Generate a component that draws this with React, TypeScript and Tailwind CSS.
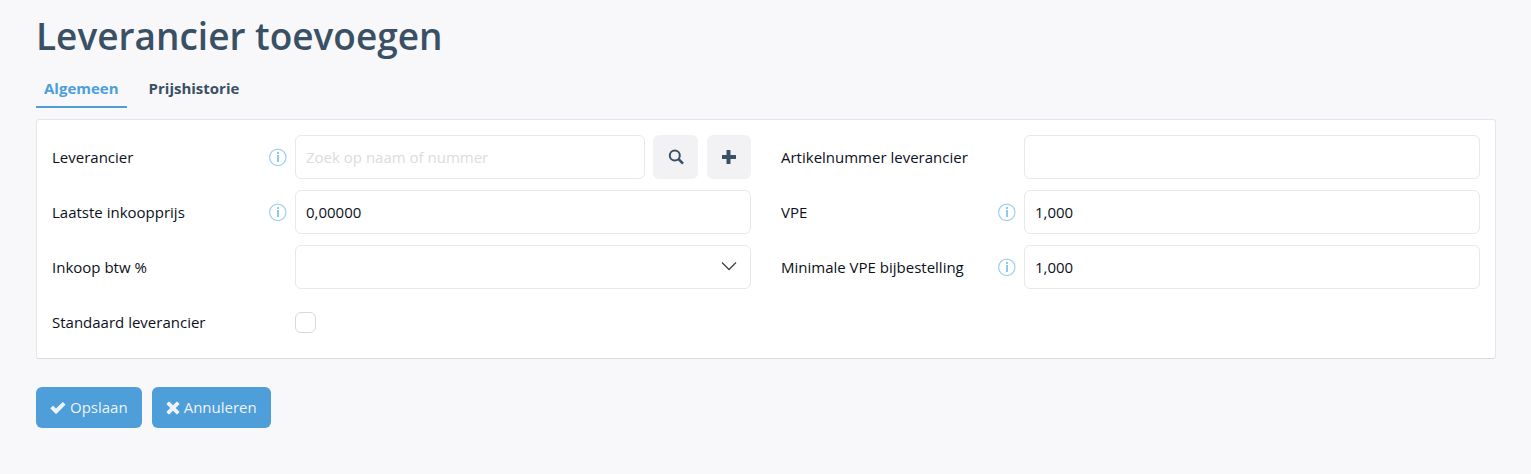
import type { ReactNode } from "react";

const inputClass =
  "h-11 w-full min-w-0 rounded-md border border-[#e8e8e9] bg-white px-[10px] text-[15px] text-[#0c1021] outline-none placeholder:text-[#dcdcdc] focus:border-[#4d9ed9]";

const addonClass =
  "flex h-11 shrink-0 items-center justify-center rounded-md bg-[#f2f2f4] text-[#3a5064]";

const InfoIcon = () => (
  <svg
    className="-mr-[7px] shrink-0"
    width="18"
    height="18"
    viewBox="0 0 18 18"
    fill="none"
    aria-hidden="true"
  >
    <circle cx="8.8" cy="9.3" r="8.200" stroke="#9fd0f1" strokeWidth="1.2" />
    <path d="M8 4h2v2H8zM8 7h2v7H8z" fill="#93c8ee" />
  </svg>
);

const SearchIcon = () => (
  <svg width="16" height="16" viewBox="0 0 16 16" fill="none" stroke="currentColor" aria-hidden="true">
    <circle cx="6.8" cy="6.4" r="5" strokeWidth="2" />
    <path d="M10.6 10.2l4.400 4.400" strokeWidth="2.6" />
  </svg>
);

const PlusIcon = () => (
  <svg width="14" height="14" viewBox="0 0 14 14" fill="currentColor" aria-hidden="true">
    <path d="M5 0h3q.5 0 .5.500V5h5q.5 0 .5.500v3q0 .5-.5.500h-5v4.500q0 .5-.5.500H5q-.5 0-.5-.5V9H0Q-.5 9-.5 8.500v-3Q-.5 5 0 5h4.500V.5Q4.500 0 5 0z" />
  </svg>
);

const CheckIcon = () => (
  <svg width="16" height="14" viewBox="0 0 16 14" fill="currentColor" aria-hidden="true">
    <path d="M12.400 1.200q.4-.4.8 0l2 2q.4.4 0 .8L6.500 12.700q-.5.4-.9 0L.6 7.800q-.4-.4 0-.8l2-2q.4-.4.8 0L6 7.600z" />
  </svg>
);

const CrossIcon = () => (
  <svg width="14" height="14" viewBox="0 0 14 14" fill="currentColor" aria-hidden="true">
    <path d="M3.400.8 7 4.300 10.600.8q.4-.4.800 0l1.800 1.800q.4.4 0 .8L9.700 7l3.500 3.600q.4.4 0 .8l-1.800 1.800q-.4.4-.8 0L7 9.700l-3.600 3.500q-.4.4-.8 0L.8 11.400q-.4-.4 0-.8L4.300 7 .8 3.400q-.4-.4 0-.8L2.600.8q.4-.4.8 0z" />
  </svg>
);

type FieldProps = {
  id: string;
  label: string;
  info?: boolean;
  children: ReactNode;
};

const Field = ({ id, label, info, children }: FieldProps) => (
  <div className="grid min-h-11 grid-cols-3 items-center">
    <div className="flex items-center justify-between pl-[15px]">
      <label htmlFor={id} className="whitespace-nowrap">
        {label}
      </label>
      {info && <InfoIcon />}
    </div>
    <div className="col-span-2 flex items-center px-[15px]">{children}</div>
  </div>
);

const App = () => {
  return (
    <main className="min-h-screen bg-[#f8f8fb] pt-[11px] pr-[35px] pb-11 pl-9 font-['Open_Sans',sans-serif] text-[15px] text-[#0c1021]">
      <h1 className="text-[37px] leading-[50px] font-semibold text-[#3a5064]">
        Leverancier toevoegen
      </h1>

      {/* Tabs */}
      <nav className="mt-[9px] flex gap-[14px] font-bold">
        <a
          href="#algemeen"
          className="border-b-2 border-[#4d9ed9] px-2 py-2 leading-5 text-[#4d9ed9]"
        >
          Algemeen
        </a>
        <a
          href="#prijshistorie"
          className="border-b-2 border-transparent px-2 py-2 leading-5 text-[#3a5064]"
        >
          Prijshistorie
        </a>
      </nav>

      <form>
        <div className="mt-[11px] grid grid-cols-2 rounded-[3px] border border-[#e6e6e9] border-b-[#d9dadd] bg-white pt-[15px] pb-[14px]">
          {/* Left column */}
          <div className="flex flex-col gap-[11px]">
            <Field id="leverancier" label="Leverancier" info>
              <input
                id="leverancier"
                type="text"
                placeholder="Zoek op naam of nummer"
                className={inputClass}
              />
              <button type="button" aria-label="Zoeken" className={`${addonClass} ml-2 w-[45px]`}>
                <SearchIcon />
              </button>
              <button type="button" aria-label="Toevoegen" className={`${addonClass} ml-[9px] w-11`}>
                <PlusIcon />
              </button>
            </Field>
            <Field id="inkoopprijs" label="Laatste inkoopprijs" info>
              <input id="inkoopprijs" type="text" defaultValue="0,00000" className={inputClass} />
            </Field>
            <Field id="btw" label="Inkoop btw %">
              <div className="relative flex w-full">
                <select id="btw" className={`${inputClass} appearance-none`}>
                  <option value=""></option>
                </select>
                <svg
                  className="pointer-events-none absolute top-4 right-[14px]"
                  width="16"
                  height="10"
                  viewBox="0 0 16 10"
                  fill="none"
                  stroke="#444"
                  strokeWidth="1.3"
                  aria-hidden="true"
                >
                  <path d="M1 1.500l7 7 7-7" />
                </svg>
              </div>
            </Field>
            <Field id="standaard" label="Standaard leverancier">
              <input
                id="standaard"
                type="checkbox"
                className="size-[21px] appearance-none rounded-md border border-[#d9d9dc] bg-white checked:bg-[#4d9ed9]"
              />
            </Field>
          </div>

          {/* Right column */}
          <div className="flex flex-col gap-[11px]">
            <Field id="artikelnummer" label="Artikelnummer leverancier">
              <input id="artikelnummer" type="text" className={inputClass} />
            </Field>
            <Field id="vpe" label="VPE" info>
              <input id="vpe" type="text" defaultValue="1,000" className={inputClass} />
            </Field>
            <Field id="minimale-vpe" label="Minimale VPE bijbestelling" info>
              <input id="minimale-vpe" type="text" defaultValue="1,000" className={inputClass} />
            </Field>
          </div>
        </div>

        {/* Actions */}
        <div className="mt-7 flex gap-[10px] text-[#eef3f8]">
          <button
            type="submit"
            className="flex h-[41px] items-center gap-1 rounded-md bg-[#4d9ed9] px-[14px]"
          >
            <CheckIcon />
            Opslaan
          </button>
          <button
            type="button"
            className="flex h-[41px] items-center gap-1 rounded-md bg-[#4d9ed9] px-[14px]"
          >
            <CrossIcon />
            Annuleren
          </button>
        </div>
      </form>
    </main>
  );
};

export default App;
